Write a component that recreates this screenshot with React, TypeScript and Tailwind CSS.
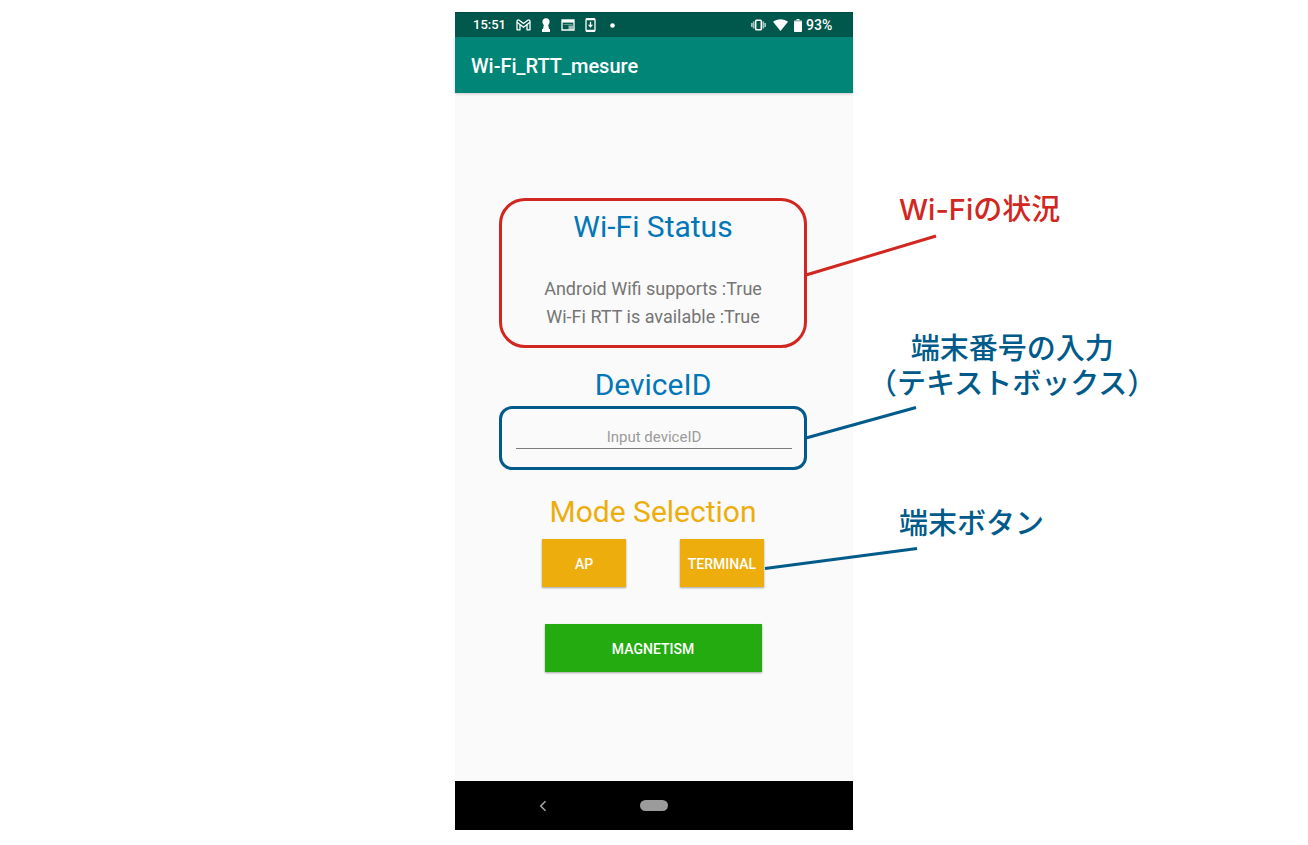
import React from "react";

const roboto = "font-[Roboto,sans-serif]";
const callout =
  "font-[Inter,'Noto_Sans_CJK_JP',sans-serif] text-[29px] leading-[35px] font-medium whitespace-nowrap";

function StatusBar() {
  return (
    <div className="flex h-[25px] items-center justify-between border-t border-[#004a40] bg-[#00574b] pr-[19px] pl-[18px] text-[14px] font-medium text-white">
      <div className="flex items-center gap-2">
        <span className="mr-[2px] text-[13px]">15:51</span>
        <svg aria-hidden="true" className="h-3 w-[15px]" viewBox="0 0 15 12" fill="none" stroke="currentColor" strokeWidth="1.300" strokeLinejoin="round">
          <path d="M1 10.800V2.200C1 1 2.300.6 3.200 1.300L7.500 4.600 11.800 1.300C12.700.6 14 1 14 2.200V10.800H11V5.600L7.500 8.300 4 5.600V10.800Z" />
          <path d="M1 3.300 4 5.600M14 3.300 11 5.600" />
        </svg>
        <svg aria-hidden="true" className="h-[14px] w-[14px]" viewBox="0 0 14 14" fill="currentColor">
          <circle cx="7" cy="3.800" r="3.600" />
          <path d="M5 6H9L10 11H11V14H3V11H4Z" />
        </svg>
        <svg aria-hidden="true" className="h-3 w-[14px]" viewBox="0 0 14 12">
          <path d="M1 1H13V11H1Z" fill="none" stroke="currentColor" strokeWidth="1.300" />
          <path d="M1 1H13V3.600H1Z" fill="currentColor" />
          <path d="M2.500 5.500H11.500" stroke="currentColor" strokeWidth="1" opacity=".4" />
          <path d="M7.500 6.500H12V10.500H7.500Z" fill="currentColor" opacity=".6" />
        </svg>
        <svg aria-hidden="true" className="mx-[2px] h-[14px] w-[11px]" viewBox="0 0 11 14">
          <rect x="1" y=".7" width="9" height="12.600" rx="1" fill="none" stroke="currentColor" strokeWidth="1.300" />
          <path d="M1 1.400H10M1 12.600H10" stroke="currentColor" strokeWidth="1.800" />
          <path d="M5.500 3.800V8" stroke="currentColor" strokeWidth="1.300" />
          <path d="M2.900 6.800H8.100L5.500 9.800Z" fill="currentColor" />
        </svg>
        <svg aria-hidden="true" className="ml-1 h-[5px] w-[5px]" viewBox="0 0 5 5" fill="currentColor">
          <circle cx="2.500" cy="2.500" r="2.300" />
        </svg>
      </div>
      <div className="flex items-center">
        <svg aria-hidden="true" className="mr-[7px] h-3 w-[15px]" viewBox="0 0 15 12" fill="none" stroke="currentColor">
          <rect x="4.700" y="1.200" width="5.600" height="9.600" rx=".8" strokeWidth="1.500" />
          <path d="M2.700 2.500V9.500M12.300 2.500V9.500" strokeWidth="1.700" opacity=".65" />
          <path d="M.8 4V8M14.200 4V8" strokeWidth="1.700" opacity=".65" />
        </svg>
        <svg aria-hidden="true" className="mr-[6px] h-3 w-[15px]" viewBox="0 0 15 12" fill="currentColor">
          <path d="M0 2.800C4.200-.7 10.800-.7 15 2.800L7.500 12Z" />
        </svg>
        <svg aria-hidden="true" className="mr-1 h-[13px] w-2" viewBox="0 0 8 13">
          <path d="M2.500 0h3V1.300H2.500Z" fill="currentColor" />
          <path d="M.7 1.300H7.300Q8 1.300 8 2V3H0V2Q0 1.300.7 1.300Z" fill="currentColor" opacity=".6" />
          <path d="M0 2.600H8V12.300Q8 13 7.300 13H.7Q0 13 0 12.300Z" fill="currentColor" />
        </svg>
        <span className="w-7">93%</span>
      </div>
    </div>
  );
}

function Connectors() {
  return (
    <svg aria-hidden="true" className="pointer-events-none absolute top-0 left-0 h-full w-full overflow-visible" fill="none" strokeWidth="3">
      <path d="M351 263 481 224" stroke="#d22620" />
      <path d="M351 426 461 395.500" stroke="#005b8a" />
      <path d="M310 556.500 462 536.500" stroke="#005b8a" />
    </svg>
  );
}

function Phone() {
  const modeButton =
    "h-12 w-[84px] bg-[#edad0c] pt-[2px] text-[14px] font-medium text-white shadow-[0_1px_2px_rgba(0,0,0,0.35)]";
  return (
    <section className={`${roboto} relative flex flex-col`}>
      <StatusBar />
      <header className="z-10 flex h-14 items-center bg-[#008577] px-4 pt-[2px] shadow-[0_1px_3px_rgba(0,0,0,0.2)]">
        <h1 className="text-[20px] font-medium text-white">Wi-Fi_RTT_mesure</h1>
      </header>
      <main className="flex flex-col items-center bg-[#fafafa] pt-[105px] pr-[46px] pb-[109px] pl-[44px]">
        <section className="flex h-[150px] w-full flex-col items-center rounded-[26px] border-3 border-[#d22620] pt-2 text-center">
          <h2 className="text-[30px] leading-9 text-[#0277b8]">Wi-Fi Status</h2>
          <div className="mt-[30px] text-[18px] leading-7 text-[#757575]">
            <p>Android Wifi supports :True</p>
            <p>Wi-Fi RTT is available :True</p>
          </div>
        </section>
        <label htmlFor="device-id" className="mt-[17px] mb-px text-[30px] leading-10 text-[#0277b8]">
          DeviceID
        </label>
        <div className="flex h-16 w-full flex-col rounded-[13px] border-3 border-[#005b8a] pt-4 pr-3 pl-[14px]">
          <input
            id="device-id"
            type="text"
            placeholder="Input deviceID"
            className="h-6 w-full border-b border-[#7d7d7d] bg-transparent text-center text-[15px] text-[#555] outline-none placeholder:text-[#9b9b9b]"
          />
        </div>
        <h2 className="mt-6 text-[30px] leading-9 text-[#edad0c]">Mode Selection</h2>
        <div className="mt-[9px] flex gap-[54px]">
          <button type="button" className={modeButton}>AP</button>
          <button type="button" className={modeButton}>TERMINAL</button>
        </div>
        <button
          type="button"
          className="mt-[37px] h-12 w-[217px] bg-[#23ab0f] pt-[2px] text-[14px] font-medium text-white shadow-[0_1px_2px_rgba(0,0,0,0.35)]"
        >
          MAGNETISM
        </button>
      </main>
      <nav className="grid h-[49px] grid-cols-[1fr_28px_1fr] items-center bg-black">
        <button type="button" aria-label="Back" className="ml-[84px] flex w-2 justify-center">
          <svg className="h-3 w-2" viewBox="0 0 8 12" fill="none" stroke="#aaa" strokeWidth="1.500">
            <path d="M6.500 1.200 1.700 6 6.500 10.800" />
          </svg>
        </button>
        <button type="button" aria-label="Home" className="h-[11px] w-7 rounded-full bg-[#9b9b9b]" />
      </nav>
      <Connectors />
    </section>
  );
}

export default function App() {
  return (
    <div className="grid min-h-screen grid-cols-[1fr_398px_1fr] items-start bg-white pt-3">
      <div />
      <Phone />
      <aside className="flex flex-col items-start pt-[180px]">
        <p className={`${callout} ml-[46px] text-[#d22620]`}>Wi-Fiの状況</p>
        <div className={`${callout} mt-[104px] ml-[15px] text-center text-[#005b8a]`}>
          <p>端末番号の入力</p>
          <p>（テキストボックス）</p>
        </div>
        <p className={`${callout} mt-[105px] ml-[46px] text-[#005b8a]`}>端末ボタン</p>
      </aside>
    </div>
  );
}
